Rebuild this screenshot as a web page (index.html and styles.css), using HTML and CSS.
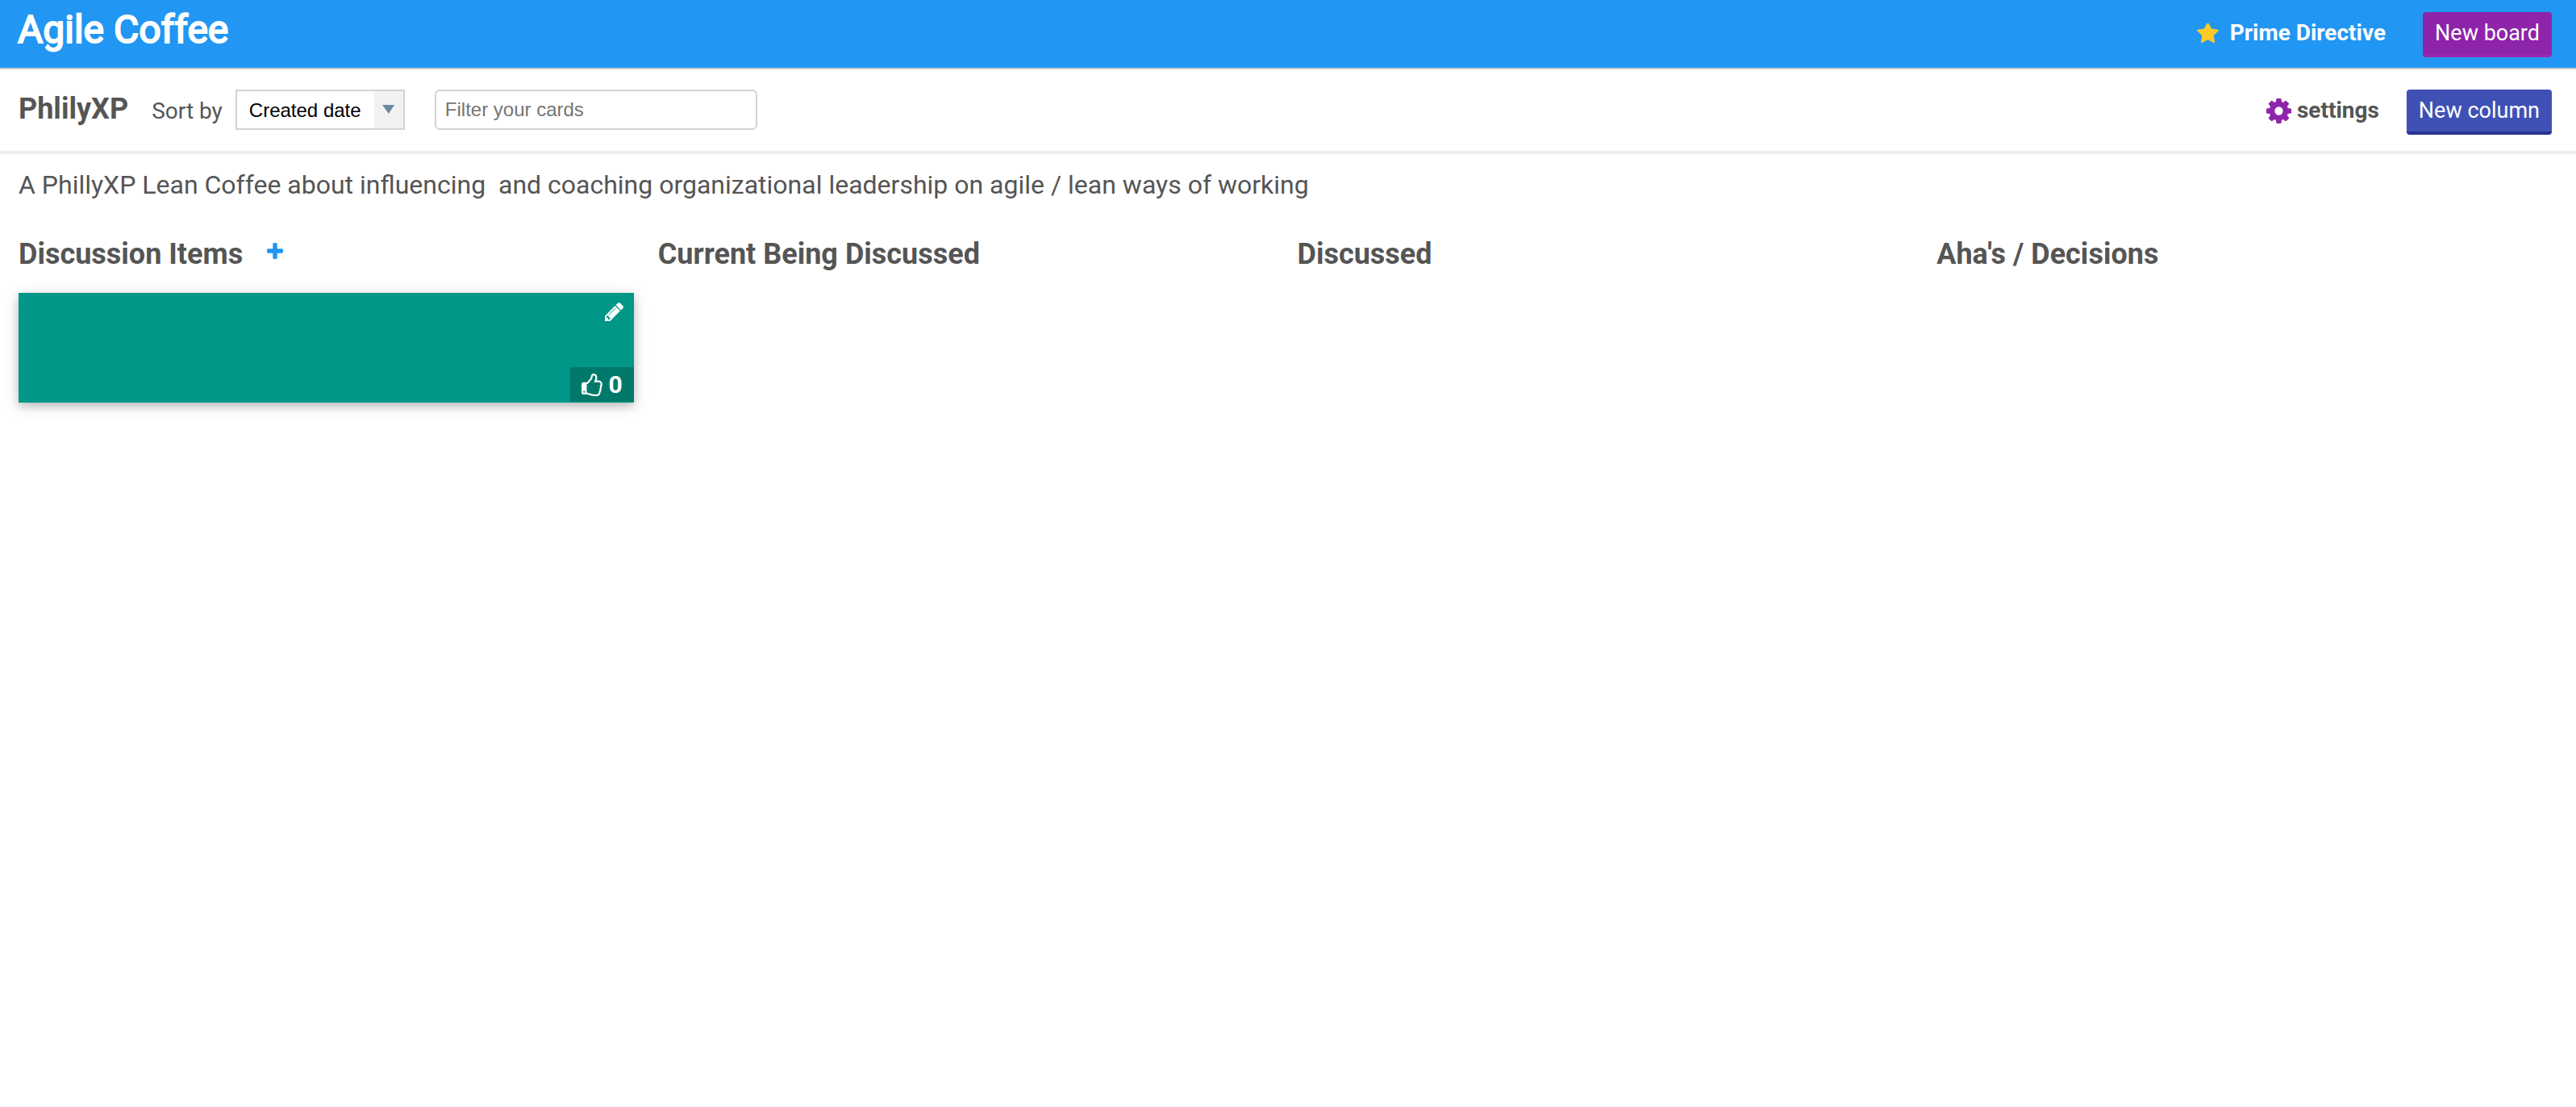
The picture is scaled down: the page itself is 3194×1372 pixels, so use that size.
FILE: index.html
```html
<!DOCTYPE html>
<html lang="en">
<head>
<meta charset="utf-8">
<title>Agile Coffee</title>
<link rel="stylesheet" href="styles.css">
</head>
<body>
<header class="site-header">
  <h1 class="brand">Agile Coffee</h1>
  <nav class="actions">
    <a class="action-link directive" href="#directive">
      <svg class="icon star" viewBox="64 128 1664 1536" aria-hidden="true"><path d="M1728 647q0 22-26 48l-363 354 86 500q1 7 1 20 0 21-10.5 35.5t-30.5 14.5q-19 0-40-12l-449-236-449 236q-22 12-40 12-21 0-31.5-14.5t-10.5-35.5q0-6 2-20l86-500-364-354q-25-27-25-48 0-37 56-46l502-73 225-455q19-41 49-41t49 41l225 455 502 73q56 9 56 46z"/></svg>
      Prime Directive
    </a>
    <button class="btn btn-board" type="button">New board</button>
  </nav>
</header>
<div class="toolbar">
  <h2 class="board-name">PhlilyXP</h2>
  <label class="sort-label" for="sort">Sort by</label>
  <select class="sort" id="sort"><option>Created date</option></select>
  <input class="filter" type="text" placeholder="Filter your cards" aria-label="Filter your cards">
  <div class="actions">
    <a class="action-link settings" href="#settings">
      <svg class="icon gear" viewBox="128 128 1536 1536" aria-hidden="true"><path d="M1152 896q0-106-75-181t-181-75-181 75-75 181 75 181 181 75 181-75 75-181zm512-109v222q0 12-8 23t-20 13l-185 28q-19 54-39 91 35 50 107 138 10 12 10 25t-9 23q-27 37-99 108t-94 71q-12 0-26-9l-138-108q-44 23-91 38-16 136-29 186-7 28-36 28h-222q-14 0-24.5-8.5t-11.5-21.5l-28-184q-49-16-90-37l-141 107q-10 9-25 9-14 0-25-11-126-114-165-168-7-10-7-23 0-12 8-23 15-21 51-66.5t54-70.5q-27-50-41-99l-183-27q-13-2-21-12.5t-8-23.5v-222q0-12 8-23t19-13l186-28q14-46 39-92-40-57-107-138-10-12-10-24 0-10 9-23 26-36 98.5-107.5t94.5-71.5q13 0 26 10l138 107q44-23 91-38 16-136 29-186 7-28 36-28h222q14 0 24.5 8.5t11.5 21.5l28 184q49 16 90 37l142-107q9-9 24-9 13 0 25 10 129 119 165 170 7 8 7 22 0 12-8 23-15 21-51 66.5t-54 70.5q26 50 41 98l183 28q13 2 21 12.5t8 23.5z"/></svg>
      settings
    </a>
    <button class="btn btn-column" type="button">New column</button>
  </div>
</div>
<main class="board">
  <p class="description">A PhillyXP Lean Coffee about influencing &nbsp;and coaching organizational leadership on agile / lean ways of working</p>
  <div class="columns">
    <section class="column">
      <div class="column-head">
        <h3 class="column-title">Discussion Items</h3>
        <button class="icon-btn add" type="button" aria-label="Add card">
          <svg class="icon plus" viewBox="192 128 1408 1408" aria-hidden="true"><path d="M1600 736v192q0 40-28 68t-68 28h-416v416q0 40-28 68t-68 28h-192q-40 0-68-28t-28-68v-416h-416q-40 0-68-28t-28-68v-192q0-40 28-68t68-28h416v-416q0-40 28-68t68-28h192q40 0 68 28t28 68v416h416q40 0 68 28t28 68z"/></svg>
        </button>
      </div>
      <article class="card">
        <button class="icon-btn edit" type="button" aria-label="Edit card">
          <svg class="icon pencil" viewBox="128 149 1515 1515" aria-hidden="true"><path d="M491 1536l91-91-235-235-91 91v107h128v128h107zm523-928q0-22-22-22-10 0-17 7l-542 542q-7 7-7 17 0 22 22 22 10 0 17-7l542-542q7-7 7-17zm-54-192l416 416-832 832h-416v-416zm683 96q0 53-37 90l-166 166-416-416 166-165q36-38 90-38 53 0 91 38l235 234q37 39 37 91z"/></svg>
        </button>
        <button class="votes" type="button" aria-label="Vote, 0 votes">
          <svg class="icon thumb" viewBox="0 0 1600 1664" aria-hidden="true"><path d="M256 1344q0-26-19-45t-45-19-45 19-19 45 19 45 45 19 45-19 19-45zm1152-576q0-51-39-89.500t-89-38.500h-352q0-58 48-159.500t48-160.500q0-98-32-145t-128-47q-26 26-38 85t-30.500 125.500-59.500 109.500q-22 23-77 91-4 5-23 30t-31.500 41-34.500 42.500-40 44-38.500 35.500-40 27-35.500 9h-32v640h32q13 0 31.500 3t33 6.500 38 11 35 11.500 35.500 12.500 29 10.500q211 73 342 73h121q192 0 192-167 0-26-5-56 30-16 47.500-52.500t17.500-73.500-18-69q53-50 53-119 0-25-10-55.500t-25-47.500q32-1 53.500-47t21.500-81zm128-1q0 89-49 163 9 33 9 69 0 77-38 144 3 21 3 43 0 101-60 178 1 139-85 219.500t-227 80.500h-129q-96 0-189.500-22.500t-216.500-65.500q-116-40-138-40h-288q-53 0-90.500-37.500t-37.500-90.500v-640q0-53 37.500-90.500t90.500-37.500h274q36-24 137-155 58-75 107-128 24-25 35.500-85.500t30.500-126.500 62-108q39-37 90-37 84 0 151 32.500t102 101.500 35 186q0 93-48 192h176q104 0 180 76t76 179z"/></svg>
          <span>0</span>
        </button>
      </article>
    </section>
    <section class="column"><div class="column-head"><h3 class="column-title">Current Being Discussed</h3></div></section>
    <section class="column"><div class="column-head"><h3 class="column-title">Discussed</h3></div></section>
    <section class="column"><div class="column-head"><h3 class="column-title">Aha's / Decisions</h3></div></section>
  </div>
</main>
</body>
</html>
```
FILE: styles.css
```css
* { box-sizing: border-box; }

body {
  margin: 0;
  background: #fff;
  color: #555;
  font: 28px/40px Roboto, "Liberation Sans", sans-serif;
}

h1, h2, h3, p { margin: 0; }

button, select, input { font: inherit; }

button {
  border: 0;
  padding: 0;
  cursor: pointer;
}

.icon {
  display: block;
  fill: currentColor;
}

.site-header {
  display: flex;
  align-items: flex-start;
  justify-content: space-between;
  height: 86px;
  padding: 0 30px 0 22px;
  background: #2196f3;
  border-bottom: 2px solid #ccc;
}

.brand {
  color: #fff;
  font-size: 48px;
  font-weight: 400;
  line-height: 74px;
  -webkit-text-stroke: 2px #fff;
}

.actions {
  display: flex;
  align-items: flex-start;
  margin-left: auto;
}

.site-header .actions { padding-top: 15px; }

.action-link {
  display: flex;
  align-items: center;
  height: 52px;
  font-weight: 700;
  text-decoration: none;
}

.directive {
  gap: 14px;
  margin-right: 46px;
  color: #fff;
}

.star {
  width: 27px;
  height: 25px;
  fill: #ffca28;
}

.settings {
  gap: 7px;
  margin-right: 34px;
  color: #555;
}

.gear {
  width: 31px;
  height: 31px;
  fill: #8e24aa;
}

.btn {
  height: 56px;
  padding: 0 15px;
  border-bottom: 4px solid;
  border-radius: 4px;
  color: #fff;
  font-size: 27px;
}

.btn-board {
  background: #8e24aa;
  border-color: #9c27b0;
}

.btn-column {
  background: #3f51b5;
  border-color: #283593;
}

.toolbar {
  display: flex;
  align-items: flex-start;
  height: 105px;
  padding: 25px 30px 0 23px;
  border-bottom: 4px solid #eee;
}

.board-name {
  margin-right: 29px;
  font-size: 36px;
  line-height: 48px;
}

.sort-label {
  margin-right: 16px;
  line-height: 54px;
}

.sort,
.filter {
  height: 50px;
  border: 2px solid #d3d3d3;
  font: 24px "Liberation Sans", sans-serif;
}

.sort {
  width: 210px;
  margin-right: 37px;
  padding: 0 0 0 15px;
  appearance: none;
  border-radius: 0;
  background:
    url("data:image/svg+xml,%3Csvg xmlns='http://www.w3.org/2000/svg' viewBox='0 0 36 46'%3E%3Cpath fill='%23f2f2f2' d='M0 0h36v46H0z'/%3E%3Cpath fill='%23698a9f' d='M10 17h15l-7 11z'/%3E%3C/svg%3E")
    right / 36px 46px no-repeat #fff;
  color: #000;
}

.filter {
  width: 400px;
  padding: 0 11px;
  border-radius: 6px;
}

.filter::placeholder { color: #757575; }

.board { padding: 18px 30px 30px 23px; }

.description {
  font-size: 32px;
  line-height: 40px;
}

.columns {
  display: grid;
  grid-template-columns: repeat(4, 1fr);
  gap: 30px;
  padding-top: 42px;
}

.column-head {
  display: flex;
  gap: 30px;
  margin-bottom: 24px;
}

.column-title {
  font-size: 36px;
  line-height: 48px;
}

.icon-btn { background: none; }

.add {
  height: 40px;
  color: #2196f3;
}

.plus {
  width: 20px;
  height: 20px;
}

.card {
  display: flex;
  flex-direction: column;
  align-items: flex-end;
  justify-content: space-between;
  min-height: 136px;
  background: #009688;
  box-shadow: 0 4px 10px rgba(0, 0, 0, 0.2), 0 4px 20px rgba(0, 0, 0, 0.12);
  color: #fff;
}

.edit {
  padding: 12px 13px;
  color: #fff;
}

.pencil {
  width: 23px;
  height: 23px;
}

.votes {
  display: flex;
  align-items: center;
  gap: 7px;
  height: 43px;
  margin-bottom: 1px;
  padding: 0 14px;
  background: #00796b;
  color: #fff;
  font-size: 30px;
  font-weight: 700;
}

.thumb {
  width: 27px;
  height: 28px;
}
```
